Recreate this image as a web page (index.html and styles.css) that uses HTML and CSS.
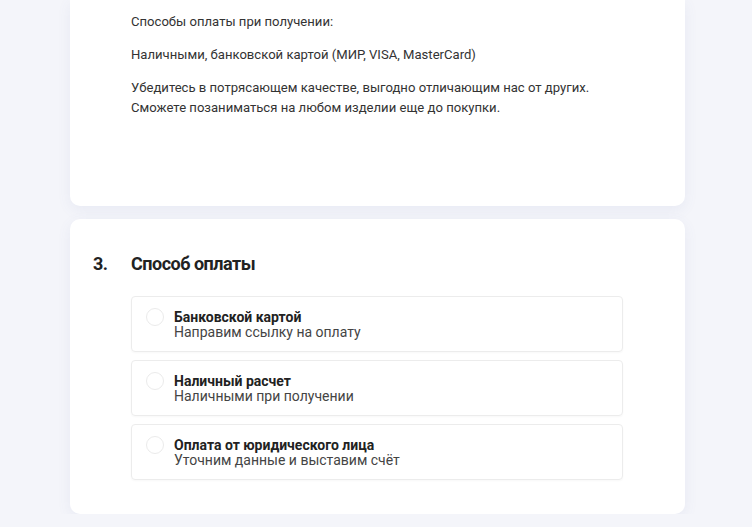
FILE: index.html
```html
<!DOCTYPE html>
<html lang="ru">
<head>
    <meta charset="UTF-8">
    <meta name="viewport" content="width=device-width, initial-scale=1.0">
    <title>Оформление заказа</title>
    <link rel="stylesheet" href="styles.css">
</head>
<body>
<div class="checkout">
    <section class="card card-delivery">
        <div class="card-body">
            <p>Способы оплаты при получении:</p>
            <p>Наличными, банковской картой (МИР, VISA, MasterCard)</p>
            <p>Убедитесь в потрясающем качестве, выгодно отличающим нас от других.<br>
                Сможете позаниматься на любом изделии еще до покупки.</p>
        </div>
    </section>

    <section class="card card-payment">
        <h2 class="step-title"><span class="step-num">3.</span>Способ оплаты</h2>
        <div class="pay-options">
            <label class="pay-option">
                <input type="radio" name="payment" value="card">
                <span class="radio"></span>
                <span class="pay-text">
                    <span class="pay-name">Банковской картой</span>
                    <span class="pay-desc">Направим ссылку на оплату</span>
                </span>
            </label>
            <label class="pay-option">
                <input type="radio" name="payment" value="cash">
                <span class="radio"></span>
                <span class="pay-text">
                    <span class="pay-name">Наличный расчет</span>
                    <span class="pay-desc">Наличными при получении</span>
                </span>
            </label>
            <label class="pay-option">
                <input type="radio" name="payment" value="company">
                <span class="radio"></span>
                <span class="pay-text">
                    <span class="pay-name">Оплата от юридического лица</span>
                    <span class="pay-desc">Уточним данные и выставим счёт</span>
                </span>
            </label>
        </div>
    </section>
</div>
</body>
</html>
```

FILE: styles.css
```css
body {
    font-family: 'Roboto', 'Liberation Sans', sans-serif;
    margin: 0;
    padding: 0;
    background-color: #f4f5fa;
    color: #333;
}

.checkout {
    width: 615px;
    margin: 0 0 0 70px;
}

.card {
    background-color: white;
    border-radius: 10px;
    box-shadow: 0 4px 14px rgba(90, 100, 160, 0.08);
}

.card-delivery {
    border-radius: 0 0 10px 10px;
    padding: 12px 62px 88px 61px;
}

.card-delivery p {
    font-size: 13.1px;
    line-height: 20px;
    margin: 0 0 13px;
}

.card-delivery p:last-child {
    margin-bottom: 0;
}

.card-payment {
    margin-top: 13px;
    padding: 33px 62px 34px 23px;
}

.step-title {
    display: flex;
    margin: 0 0 20px;
    font-size: 18px;
    line-height: 24px;
    font-weight: 700;
    color: #222;
    letter-spacing: -0.5px;
}

.step-num {
    width: 38px;
}

.pay-options {
    margin-left: 38px;
    display: flex;
    flex-direction: column;
    gap: 8px;
}

.pay-option {
    display: flex;
    align-items: flex-start;
    padding: 13px 14px 11px;
    border: 1px solid #ececec;
    border-radius: 4px;
    box-shadow: 0 1px 2px rgba(0, 0, 0, 0.03);
    cursor: pointer;
}

.pay-option input {
    display: none;
}

.radio {
    width: 16px;
    height: 16px;
    border: 1px solid #ebebeb;
    border-radius: 50%;
    margin: -2px 10px 0 0;
    flex-shrink: 0;
}

.pay-option input:checked + .radio {
    border: 5px solid #4a6cf7;
    width: 8px;
    height: 8px;
}

.pay-text {
    display: flex;
    flex-direction: column;
}

.pay-name {
    font-size: 14px;
    line-height: 15px;
    font-weight: 700;
    color: #222;
}

.pay-desc {
    font-size: 14px;
    line-height: 15px;
    color: #444;
}
```
